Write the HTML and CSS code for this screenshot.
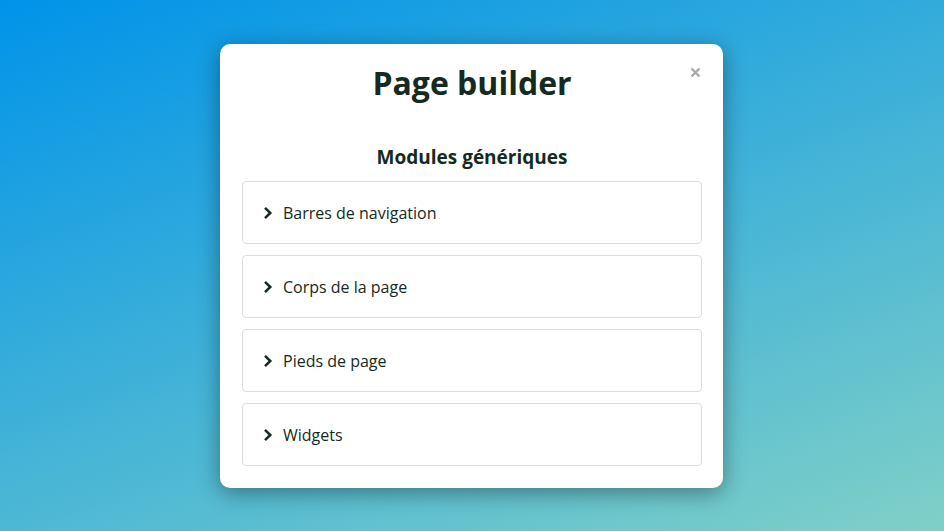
FILE: index.html
```html
<!DOCTYPE html>
<html lang="fr">
<head>
<meta charset="utf-8">
<title>Page builder</title>
<link rel="stylesheet" href="styles.css">
</head>
<body>
<div class="backdrop">
  <div class="modal">
    <button class="close" aria-label="Fermer">
      <svg width="11" height="11" viewBox="0 0 11 11"><path d="M1.5 1.5L9.5 9.5M9.5 1.5L1.5 9.5" stroke="#aaaaaa" stroke-width="2.4" stroke-linecap="butt"/></svg>
    </button>
    <h1 class="title">Page builder</h1>
    <h2 class="subtitle">Modules génériques</h2>
    <ul class="list">
      <li class="item"><svg class="chev" width="10" height="14" viewBox="0 0 10 14"><path d="M2 1.8L7.3 7L2 12.2" fill="none" stroke="#152a20" stroke-width="2.5"/></svg><span>Barres de navigation</span></li>
      <li class="item"><svg class="chev" width="10" height="14" viewBox="0 0 10 14"><path d="M2 1.8L7.3 7L2 12.2" fill="none" stroke="#152a20" stroke-width="2.5"/></svg><span>Corps de la page</span></li>
      <li class="item"><svg class="chev" width="10" height="14" viewBox="0 0 10 14"><path d="M2 1.8L7.3 7L2 12.2" fill="none" stroke="#152a20" stroke-width="2.5"/></svg><span>Pieds de page</span></li>
      <li class="item"><svg class="chev" width="10" height="14" viewBox="0 0 10 14"><path d="M2 1.8L7.3 7L2 12.2" fill="none" stroke="#152a20" stroke-width="2.5"/></svg><span>Widgets</span></li>
    </ul>
  </div>
</div>
</body>
</html>
```
FILE: styles.css
```css
* { box-sizing: border-box; }
html, body { margin: 0; padding: 0; height: 100%; }
body {
  font-family: "Open Sans", "Noto Sans", sans-serif;
  color: #152a20;
  background-image: linear-gradient(160deg, #0093E9 0%, #80D0C7 100%);
  min-height: 100vh;
}
.backdrop {
  height: 100vh;
  display: flex;
  align-items: center;
  justify-content: center;
  padding: 1px 1px 0 0;
}
.modal {
  position: relative;
  width: 503px;
  background: #fff;
  border-radius: 10px;
  padding: 20px 21px 22px 22px;
  box-shadow: 0 5px 22px rgba(0, 0, 0, 0.38);
}
.close {
  position: absolute;
  top: 23px;
  right: 22px;
  width: 11px;
  height: 11px;
  padding: 0;
  border: 0;
  background: none;
  display: flex;
}
.title {
  margin: 0;
  text-align: center;
  font-size: 32px;
  line-height: 38px;
  font-weight: 700;
}
.subtitle {
  margin: 43px 0 0;
  text-align: center;
  font-size: 19px;
  line-height: 24px;
  font-weight: 700;
}
.list {
  list-style: none;
  margin: 12px 0 0;
  padding: 0;
  display: flex;
  flex-direction: column;
  gap: 11px;
}
.item {
  height: 63px;
  border: 1px solid #dddddd;
  border-radius: 4px;
  padding: 0 20px;
  display: flex;
  align-items: center;
  font-size: 16px;
}
.chev { margin-right: 10px; flex: none; }
```
